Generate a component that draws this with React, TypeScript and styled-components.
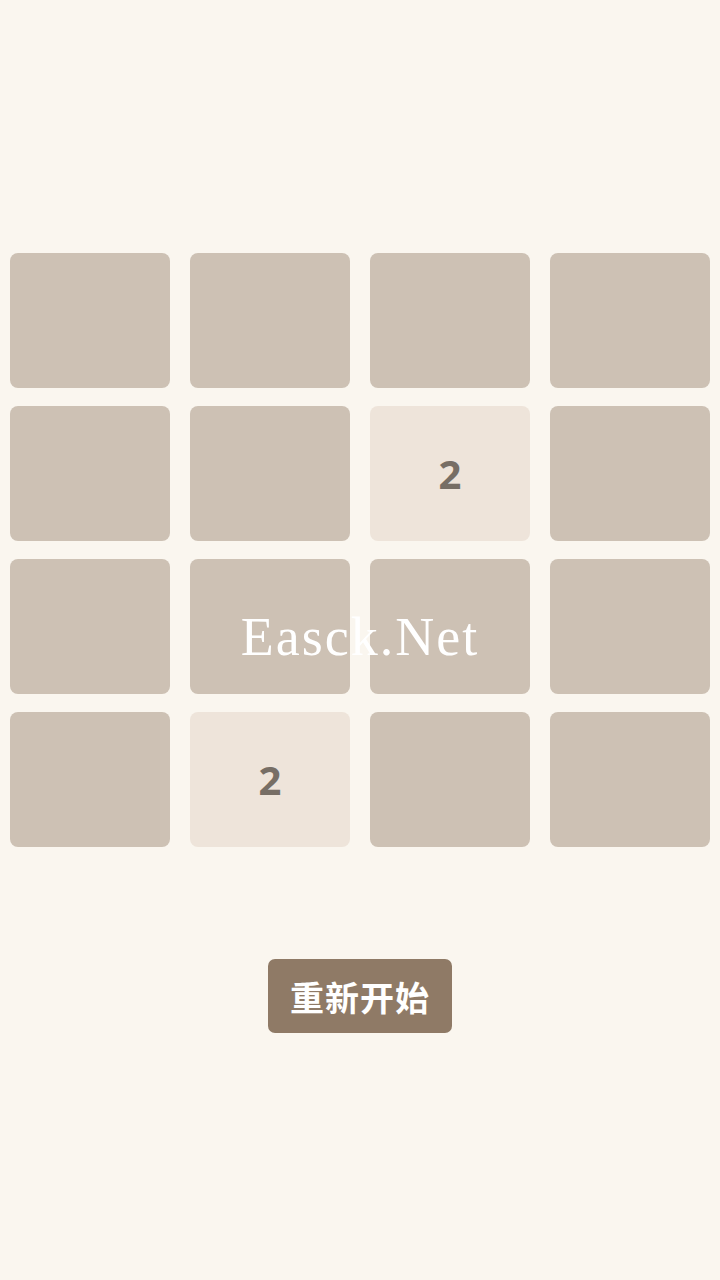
import React from "react";
import styled, { createGlobalStyle } from "styled-components";

const GlobalStyle = createGlobalStyle`
  html, body {
    margin: 0;
    padding: 0;
    background: #faf6ef;
  }
  body {
    font-family: "Noto Sans", "Noto Sans CJK SC", sans-serif;
  }
`;

const Page = styled.div`
  position: relative;
  width: 720px;
  height: 1280px;
  background: #faf6ef;
  display: flex;
  flex-direction: column;
  align-items: center;
  padding-top: 253px;
  box-sizing: border-box;
`;

const Board = styled.div`
  display: grid;
  grid-template-columns: repeat(4, 160px);
  grid-auto-rows: 135px;
  column-gap: 20px;
  row-gap: 18px;
`;

const Tile = styled.div<{ $value?: number }>`
  border-radius: 8px;
  background: ${(p) => (p.$value ? "#eee4da" : "#cdc1b4")};
  display: flex;
  align-items: center;
  justify-content: center;
  color: #776e65;
  font-family: "Noto Sans", "Open Sans", sans-serif;
  font-weight: 700;
  font-size: 40px;
`;

const RestartButton = styled.button`
  margin-top: 112px;
  width: 184px;
  height: 74px;
  border: none;
  border-radius: 7px;
  background: #8f7a66;
  color: #fff;
  font-family: "Noto Sans CJK SC", sans-serif;
  font-weight: 700;
  font-size: 34px;
  letter-spacing: 1px;
  cursor: pointer;
  padding: 0;
`;

const Watermark = styled.div`
  position: absolute;
  left: 0;
  right: 0;
  top: 606px;
  text-align: center;
  font-family: "Liberation Serif", serif;
  font-size: 54px;
  letter-spacing: 2px;
  color: #ffffff;
  pointer-events: none;
`;

const board = [
  [0, 0, 0, 0],
  [0, 0, 2, 0],
  [0, 0, 0, 0],
  [0, 2, 0, 0],
];

export default function App() {
  return (
    <Page>
      <GlobalStyle />
      <Board>
        {board.flat().map((v, i) => (
          <Tile key={i} $value={v}>
            {v ? v : null}
          </Tile>
        ))}
      </Board>
      <RestartButton>重新开始</RestartButton>
      <Watermark>Easck.Net</Watermark>
    </Page>
  );
}
